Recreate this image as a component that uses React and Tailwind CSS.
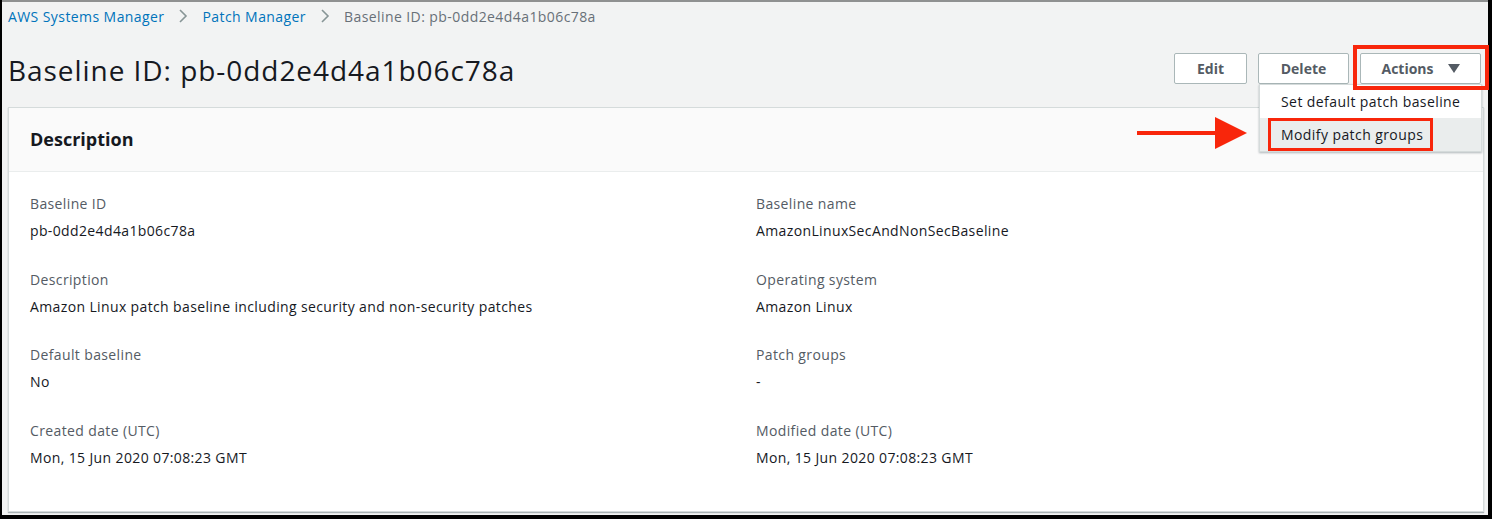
import React from "react";

const fields = [
  ["Baseline ID", "pb-0dd2e4d4a1b06c78a", "Baseline name", "AmazonLinuxSecAndNonSecBaseline"],
  ["Description", "Amazon Linux patch baseline including security and non-security patches", "Operating system", "Amazon Linux"],
  ["Default baseline", "No", "Patch groups", "-"],
  ["Created date (UTC)", "Mon, 15 Jun 2020 07:08:23 GMT", "Modified date (UTC)", "Mon, 15 Jun 2020 07:08:23 GMT"],
];

function Field({ label, value }) {
  return (
    <div className="flex flex-col tracking-[0.37px]">
      <div className="text-[14px] leading-[22px] text-[#545b64]">{label}</div>
      <div className="mt-[5px] text-[14px] leading-[22px] text-[#16191f]">{value}</div>
    </div>
  );
}

export default function App() {
  return (
    <div
      className="w-[1492px] h-[519px] bg-black pl-[2px] pr-[4px] pb-[4px] flex"
      style={{ fontFamily: '"Open Sans", "Noto Sans", sans-serif' }}
    >
      <div className="relative flex-1 flex flex-col bg-[#f2f3f3] border-t-2 border-[#8f9191]">
        {/* Breadcrumb */}
        <div className="h-[28px] flex items-center pl-[6px] gap-[14px] text-[14px] tracking-[0.42px]">
          <span className="text-[#0073bb]">AWS Systems Manager</span>
          <svg width="10" height="16" viewBox="0 0 10 16" className="text-[#879596]">
            <path d="M2 2l6 6-6 6" fill="none" stroke="currentColor" strokeWidth="1.6" />
          </svg>
          <span className="text-[#0073bb]">Patch Manager</span>
          <svg width="10" height="16" viewBox="0 0 10 16" className="text-[#879596]">
            <path d="M2 2l6 6-6 6" fill="none" stroke="currentColor" strokeWidth="1.6" />
          </svg>
          <span className="text-[#687078]">Baseline ID: pb-0dd2e4d4a1b06c78a</span>
        </div>

        {/* Header */}
        <div className="h-[77px] flex items-center justify-between pl-[6px] pr-[7px]">
          <h1 className="text-[28px] text-[#16191f] leading-none tracking-[0.95px] mt-[2px]">Baseline ID: pb-0dd2e4d4a1b06c78a</h1>
          <div className="flex gap-[11px] items-center">
            <button className="w-[73px] h-[31px] border border-[#aab7b8] bg-white rounded-[2px] text-[14px] font-bold text-[#545b64]">
              Edit
            </button>
            <button className="w-[91px] h-[31px] border border-[#aab7b8] bg-white rounded-[2px] text-[14px] font-bold text-[#545b64]">
              Delete
            </button>
            <button className="w-[121px] h-[31px] border border-[#aab7b8] bg-white rounded-[2px] text-[14px] font-bold text-[#545b64] flex items-center justify-center gap-[14px]">
              Actions
              <svg width="12" height="9" viewBox="0 0 12 9">
                <path d="M0 0h12L6 9z" fill="#545b64" />
              </svg>
            </button>
          </div>
        </div>

        {/* Card */}
        <div className="ml-[6px] mr-[4px] bg-white border border-[#d5dbdb] shadow-[0_1px_1px_rgba(0,28,36,0.3)] flex flex-col h-[405px]">
          <div className="h-[64px] bg-[#fafafa] border-b border-[#eaeded] flex items-center pl-[21px]">
            <h2 className="text-[18px] font-bold text-[#16191f]">Description</h2>
          </div>
          <div className="pl-[21px] pt-[21px] flex flex-col gap-[26.7px]">
            {fields.map((r) => (
              <div key={r[0]} className="grid grid-cols-[726px_1fr]">
                <Field label={r[0]} value={r[1]} />
                <Field label={r[2]} value={r[3]} />
              </div>
            ))}
          </div>
        </div>

        {/* Actions dropdown menu */}
        <div className="absolute left-[1257px] top-[82px] w-[223px] bg-white border border-[#d5dbdb] shadow-[0_1px_2px_rgba(0,28,36,0.3)] flex flex-col text-[14px] text-[#16191f] tracking-[0.42px]">
          <div className="h-[33px] flex items-center pl-[21px]">Set default patch baseline</div>
          <div className="h-[33px] flex items-center pl-[21px] bg-[#eaeded]">Modify patch groups</div>
        </div>

        {/* Red annotations */}
        <div className="absolute left-[1351px] top-[43px] w-[136px] h-[45px] border-4 border-[#f8260b]" />
        <div className="absolute left-[1266px] top-[116px] w-[165px] h-[33px] border-[3px] border-[#f8260b]" />
        <svg className="absolute left-[1133px] top-[113px]" width="114" height="36" viewBox="0 0 114 36">
          <rect x="2" y="16" width="82" height="4" fill="#f8260b" />
          <path d="M80 2L112 18L80 34z" fill="#f8260b" />
        </svg>
      </div>
    </div>
  );
}
